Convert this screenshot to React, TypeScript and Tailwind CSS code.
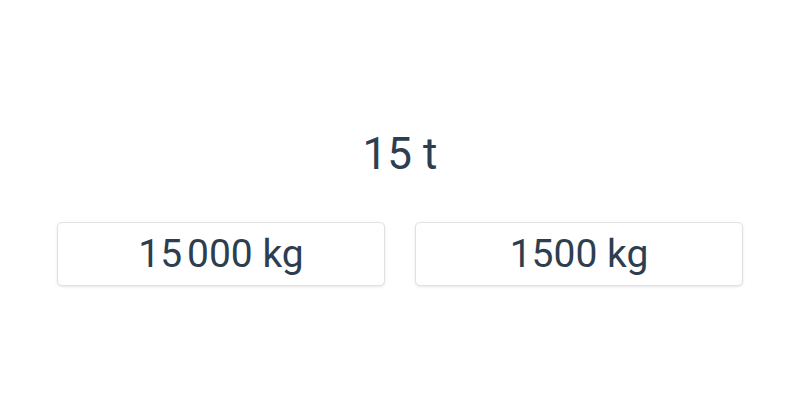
const App = () => {
  return (
    <div className="flex h-[400px] w-[800px] flex-col items-center bg-white font-['Roboto',sans-serif] text-[#2c3e50]">
      <p className="mt-[126px] text-[44px] leading-[56px]">15 t</p>
      <div className="mt-[40px] flex gap-[30px]">
        <button className="h-[64px] w-[328px] rounded-[5px] border border-[#e2e2e2] bg-white text-[39px] shadow-[0_1px_3px_rgba(0,0,0,0.1)]">
          15{"\u202F"}000 kg
        </button>
        <button className="h-[64px] w-[328px] rounded-[5px] border border-[#e2e2e2] bg-white text-[39px] shadow-[0_1px_3px_rgba(0,0,0,0.1)]">
          1500 kg
        </button>
      </div>
    </div>
  );
};

export default App;
